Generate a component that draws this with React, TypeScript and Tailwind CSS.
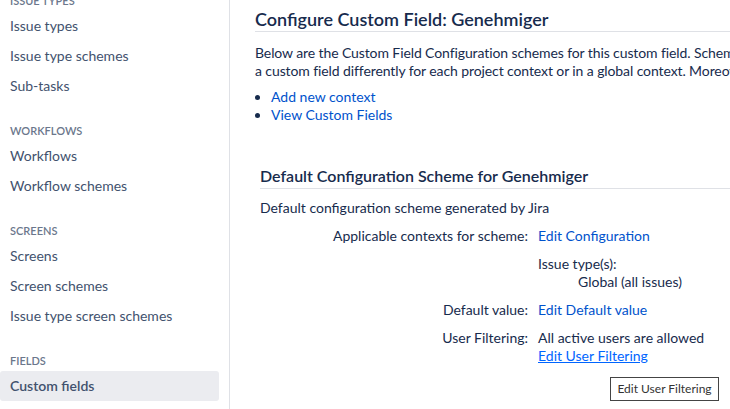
import React from "react";

const font = { fontFamily: "Lato, 'Noto Sans', sans-serif" };

type Section = { title: string; items: string[]; active?: string };

const sections: Section[] = [
  { title: "Issue types", items: ["Issue types", "Issue type schemes", "Sub-tasks"] },
  { title: "Workflows", items: ["Workflows", "Workflow schemes"] },
  { title: "Screens", items: ["Screens", "Screen schemes", "Issue type screen schemes"] },
  { title: "Fields", items: ["Custom fields"], active: "Custom fields" },
];

function Sidebar() {
  return (
    <aside className="w-[230px] shrink-0 border-r border-[#dfe1e6]">
      <nav className="mt-[-9px] mr-[10px] flex flex-col gap-5">
        {sections.map((s) => (
          <div key={s.title}>
            <div className="flex h-[20px] items-center px-[10px] text-[11px] font-semibold uppercase text-[#6b778c]">
              {s.title}
            </div>
            {s.items.map((item) => (
              <a
                key={item}
                className={`flex h-[30px] items-center rounded-[3px] px-[10px] text-[14px] ${
                  item === s.active
                    ? "bg-[#ebecf0] font-semibold text-[#42526e]"
                    : "text-[#42526e]"
                }`}
              >
                {item}
              </a>
            ))}
          </div>
        ))}
      </nav>
    </aside>
  );
}

function Row({ label, children }: { label?: string; children: React.ReactNode }) {
  return (
    <div className="flex py-[5px]">
      <div className="w-[278px] shrink-0 pr-[10px] text-right">{label}</div>
      <div>{children}</div>
    </div>
  );
}

export default function App() {
  return (
    <div
      className="relative flex h-[409px] w-[730px] overflow-hidden bg-white text-[14px] leading-[18px] text-[#172b4d]"
      style={font}
    >
      <Sidebar />
      <main className="w-[900px] shrink-0 pl-[25px] pt-[7px]">
        <h2 className="border-b border-[#dfe1e6] text-[18px] leading-6 font-semibold text-[#172b4d]">
          Configure Custom Field: Genehmiger
        </h2>
        <p className="mt-[12px] whitespace-nowrap tracking-[-0.1px]">
          Below are the Custom Field Configuration schemes for this custom field. Schemes allow you to configure
          <br />
          a custom field differently for each project context or in a global context. Moreover, you can also specify
        </p>
        <ul className="mt-[8px] list-disc pl-4 marker:text-[#172b4d]">
          <li>
            <a className="text-[#0052cc]">Add new context</a>
          </li>
          <li>
            <a className="text-[#0052cc]">View Custom Fields</a>
          </li>
        </ul>

        <section className="mt-[40px] pl-[5px]">
          <h3 className="border-b border-[#dfe1e6] text-[16px] leading-6 font-semibold">
            Default Configuration Scheme for Genehmiger
          </h3>
          <p className="mt-[10px]">Default configuration scheme generated by Jira</p>
          <div className="mt-[5px]">
            <Row label="Applicable contexts for scheme:">
              <a className="text-[#0052cc]">Edit Configuration</a>
            </Row>
            <Row>
              <div>Issue type(s):</div>
              <ul className="pl-10">
                <li>Global (all issues)</li>
              </ul>
            </Row>
            <Row label="Default value:">
              <a className="text-[#0052cc]">Edit Default value</a>
            </Row>
            <Row label="User Filtering:">
              <div>All active users are allowed</div>
              <a className="text-[#0065ff] underline">Edit User Filtering</a>
            </Row>
          </div>
        </section>
      </main>
      <div className="absolute left-[610px] top-[377px] flex h-[24px] w-[109px] items-center justify-center border border-[#444] bg-white text-[12px] text-[#333]">
        Edit User Filtering
      </div>
    </div>
  );
}
